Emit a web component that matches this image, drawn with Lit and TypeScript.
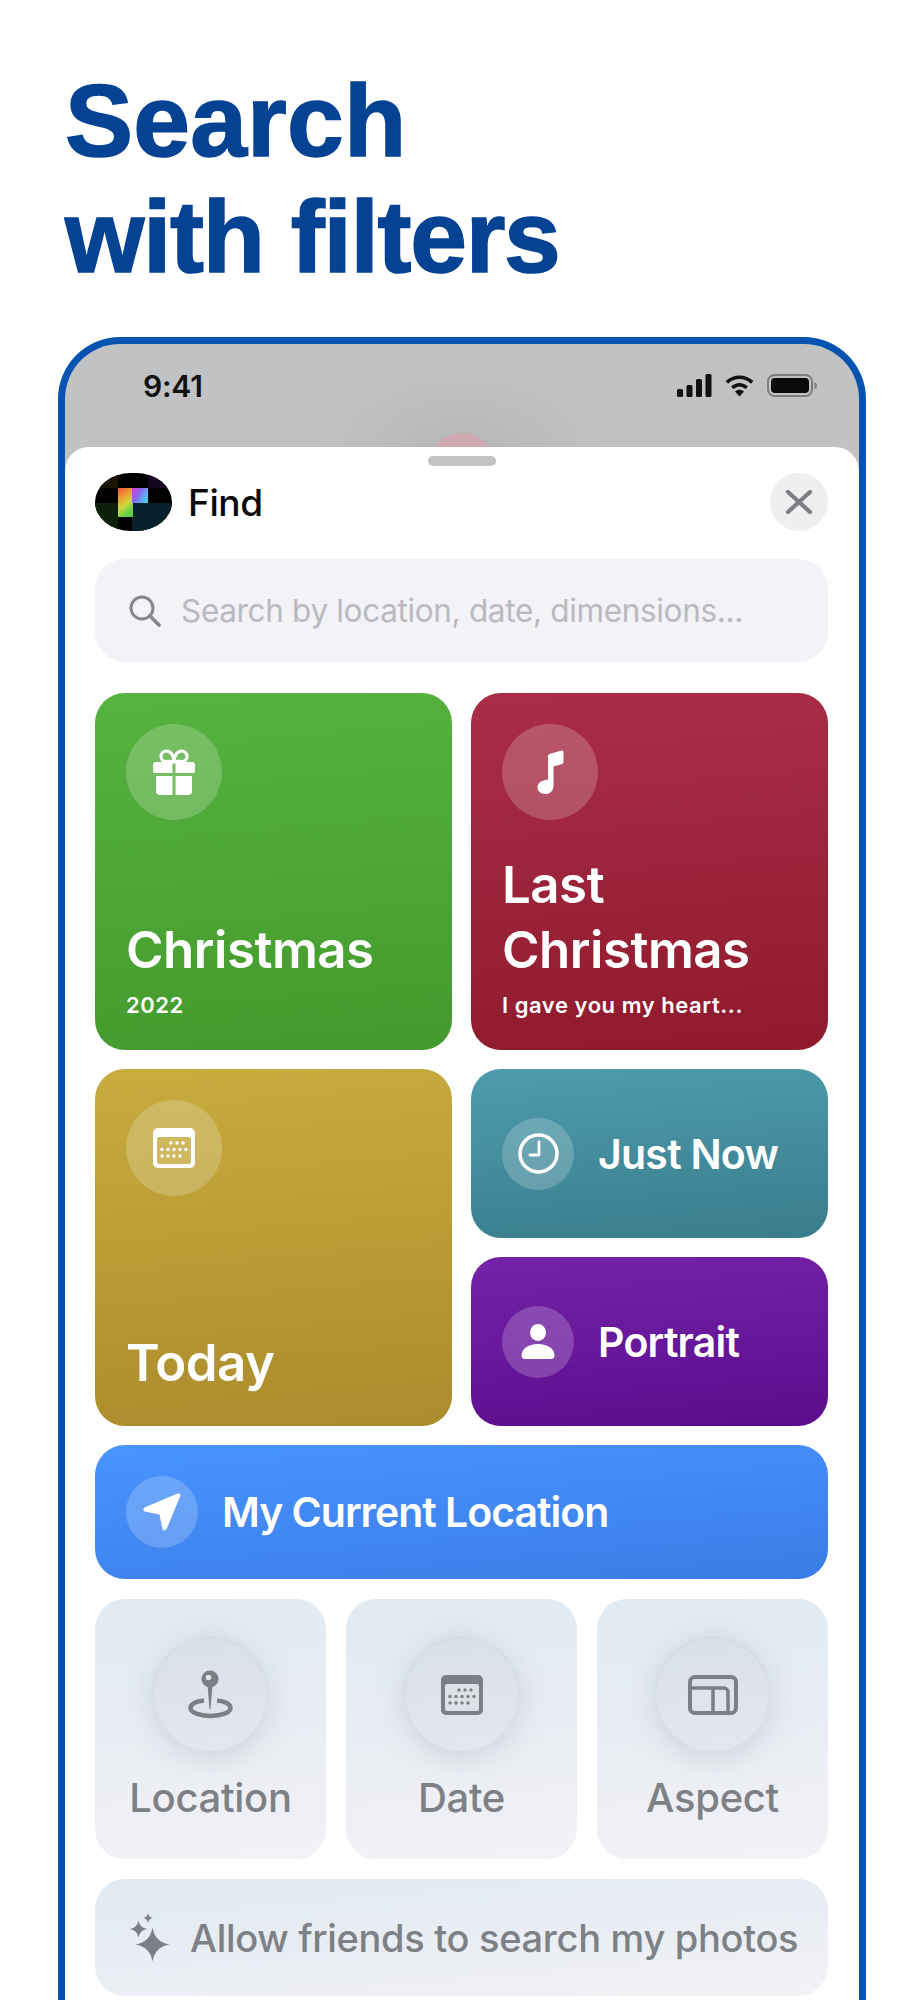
import { LitElement, html, css, svg } from "lit";
import { customElement } from "lit/decorators.js";

const star = (x: number, y: number, r: number) => {
  const k = r * 0.14;
  return `M${x} ${y - r}Q${x + k} ${y - k} ${x + r} ${y}Q${x + k} ${y + k} ${x} ${y + r}Q${x - k} ${y + k} ${x - r} ${y}Q${x - k} ${y - k} ${x} ${y - r}Z`;
};
const gift = svg`<svg width="42" height="46" viewBox="0 0 42 46" fill="#fff"><path d="M0 16a3 3 0 0 1 3-3h16.500v11H2a2 2 0 0 1-2-2zM22.500 13H39a3 3 0 0 1 3 3v6a2 2 0 0 1-2 2H22.500zM3 27h16.500v19H7a4 4 0 0 1-4-4zM22.500 27H39v15a4 4 0 0 1-4 4H22.500z"/><path d="M21 13c-2-1-4.500-.5-8-.5A5 5 0 0 1 8 7.500a5.500 5.500 0 0 1 5.500-5.500C18 2 21 7 21 13c0-6 3-11 7.500-11A5.500 5.500 0 0 1 34 7.500a5 5 0 0 1-5 5c-3.500 0-6-.5-8 .5z" fill="none" stroke="#fff" stroke-width="3.200"/></svg>`;
const note = svg`<svg width="28" height="44" viewBox="0 0 28 44" fill="#fff"><path d="M12 6.500c0-1.500.8-2.400 2.200-2.800l10.500-3C26.500.200 27.500 1 27.500 2.500v9c0 1.500-.7 2.300-2 2.700L17.500 16.500V36c0 4.500-3.500 8-8 8C4.500 44 1.500 41 1.500 37.500c0-4 3.200-6.500 7-7.300L12 29.500z"/></svg>`;
const cal = (c: string, dots: string) => svg`<svg width="42" height="40" viewBox="0 0 42 40"><rect width="42" height="40" rx="5" fill="${c}"/><rect x="4" y="9" width="34" height="27" rx="2" fill="${dots}"/>${[
  [19, 14], [25, 14], [31, 14], [10, 20.5], [16, 20.5], [22, 20.5], [28, 20.5], [34, 20.5], [10, 27], [16, 27], [22, 27], [28, 27],
].map(([x, y]) => svg`<circle cx="${x - 1}" cy="${y + 1}" r="1.7" fill="${c}"/>`)}</svg>`;
const clock = svg`<svg width="41" height="41" viewBox="0 0 41 41" fill="none" stroke="#fff"><circle cx="20.5" cy="20.5" r="18.5" stroke-width="3.5"/><path d="M21 9v13h-9" stroke-width="2.8" stroke-linecap="round" stroke-linejoin="round"/></svg>`;
const person = svg`<svg width="34" height="35" viewBox="0 0 34 35" fill="#fff"><ellipse cx="17" cy="8.5" rx="8" ry="8.5"/><path d="M17 20c10 0 16.500 5 16.500 11.500 0 2.500-1.500 3.500-4 3.500H4.500C2 35 .5 34 .5 31.500.5 25 7 20 17 20z"/></svg>`;
const arrow = svg`<svg width="38" height="38" viewBox="0 0 38 38" fill="#fff"><path d="M34.500.6c2-.8 3.400.7 2.700 2.700L23.800 35.500c-1 2.600-4 2.600-4.600-.3L16.500 21.500 2.600 18.800C-.2 18.200-.3 15.300 2.200 14.300z"/></svg>`;
const pin = svg`<svg width="48" height="50" viewBox="0 0 48 50" fill="none"><path d="M17 30.500C9 31 3.500 34 3.500 38c0 4.500 9 8 20 8s20-3.500 20-8c0-4-5.500-7-13.500-7.500" stroke="#7c7f85" stroke-width="4.500"/><circle cx="23" cy="9" r="8.500" fill="#7c7f85"/><circle cx="21.500" cy="7.500" r="2.800" fill="#e2e6eb"/><path d="M20.500 15h5L23.500 39h-1z" fill="#7c7f85"/></svg>`;
const aspect = svg`<svg width="50" height="40" viewBox="0 0 50 40" fill="none" stroke="#7c7f85" stroke-width="4"><rect x="2" y="2" width="46" height="36" rx="5"/><path d="M3 13h33a4 4 0 0 1 4 4v19M25 13v24" stroke-width="3.5"/></svg>`;
const sparkle = svg`<svg width="40" height="49" viewBox="0 0 40 49" fill="#7c7f85"><path d="${star(22.5, 31.5, 17)}"/><path d="${star(8.5, 16, 8.5)}"/><path d="${star(18, 5, 5)}"/></svg>`;

@customElement("app-root")
export class AppRoot extends LitElement {
  static styles = css`
    :host { display: block; height: 2000px; overflow: hidden; background: #fff; font-family: Inter, "Liberation Sans", sans-serif; }
    h1 { margin: 0; padding: 63px 0 0 65px; font-family: "Liberation Sans", Arial, sans-serif; font-size: 102px; line-height: 116px; font-weight: 700; color: #044293; height: 337px; box-sizing: border-box; -webkit-text-stroke: 1.6px #044293; }
    h1 span { display: block; }
    .l1 { letter-spacing: .2px; }
    .l2 { letter-spacing: -1.3px; }
    .phone { margin: 0 57px 0 58px; height: 1700px; box-sizing: border-box; border: 7px solid #0453b0; border-bottom: 0; border-radius: 62px 62px 0 0; background: #c0c2c3; position: relative; overflow: hidden; }
    .pink { position: absolute; left: 363px; top: 89px; width: 68px; height: 68px; border-radius: 50%; background: #cfa8b1; }
    .halo { position: absolute; left: 247px; top: 20px; width: 300px; height: 190px; border-radius: 50%; background: radial-gradient(closest-side, #b3b5b7, rgba(192,194,195,0)); }
    .status { position: relative; height: 103px; display: flex; justify-content: space-between; padding: 20px 42px 0 78px; box-sizing: border-box; align-items: flex-start; }
    .time { font-size: 30px; font-weight: 600; color: #111; line-height: 44px; letter-spacing: -.2px; }
    .sicons { display: flex; gap: 13px; padding-top: 10px; }
    .sheet { position: relative; background: #fff; border-radius: 24px 24px 0 0; height: 1600px; padding: 26px 31px 0 30px; box-sizing: border-box; display: flex; flex-direction: column; }
    .handle { position: absolute; left: 363px; top: 9px; width: 68px; height: 10px; border-radius: 5px; background: #c3c3c6; }
    .head { display: flex; align-items: center; height: 58px; }
    .logo { width: 77px; height: 58px; border-radius: 36px / 29px; overflow: hidden; flex: none; }
    .find { margin-left: 16px; font-size: 37px; font-weight: 500; color: #0a0a0a; flex: 1; letter-spacing: -.4px; }
    .close { width: 58px; height: 58px; border-radius: 50%; background: #efeff1; display: flex; align-items: center; justify-content: center; }
    .search { margin-top: 28px; height: 103px; border-radius: 30px; background: #f2f2f7; display: flex; align-items: center; padding-left: 34px; color: #b9b9be; font-size: 31.5px; letter-spacing: -.33px; flex: none; }
    .search svg { margin-right: 20px; }
    .grid { margin-top: 31px; display: grid; grid-template-columns: 357px 357px; column-gap: 19px; row-gap: 19px; }
    .card { border-radius: 30px; color: #fff; box-sizing: border-box; display: flex; }
    .big { height: 357px; padding: 31px; flex-direction: column; justify-content: space-between; }
    .stack { display: flex; flex-direction: column; gap: 19px; }
    .small { height: 169px; padding: 0 31px; align-items: center; gap: 24px; }
    .green { background: linear-gradient(175deg, #57b23f, #439a2c); }
    .red { background: linear-gradient(175deg, #aa2d47, #8e1a2c); }
    .gold { background: linear-gradient(175deg, #c8ac3e, #ab8b2c); }
    .teal { background: linear-gradient(175deg, #4d9cad, #3a7c8c); }
    .purple { background: linear-gradient(175deg, #7423a8, #5b0c8c); }
    .blue { background: linear-gradient(175deg, #4994ff, #3a7ce6); }
    .disc { border-radius: 50%; background: rgba(255,255,255,.2); display: flex; align-items: center; justify-content: center; flex: none; }
    .d96 { width: 96px; height: 96px; }
    .d72 { width: 72px; height: 72px; }
    .t { font-size: 51px; font-weight: 600; line-height: 65px; letter-spacing: -.5px; }
    .s { font-size: 22px; font-weight: 600; line-height: 26px; margin-top: 10px; letter-spacing: .55px; }
    .m { font-size: 41px; font-weight: 600; letter-spacing: -.75px; }
    .loc .m { letter-spacing: -1px; }
    .bt { padding-bottom: 1px; }
    .today { padding-bottom: 0; }
    .loc { margin-top: 19px; height: 134px; padding: 0 31px; align-items: center; gap: 24px; flex: none; }
    .trio { margin-top: 20px; display: grid; grid-template-columns: 231px 231px 231px; column-gap: 20px; }
    .tile { height: 260px; border-radius: 30px; background: linear-gradient(175deg, #e0eaf1, #f2f1f6); display: flex; flex-direction: column; align-items: center; padding-top: 38px; box-sizing: border-box; color: #7d8085; font-size: 40px; font-weight: 500; }
    .ring { width: 115px; height: 115px; border-radius: 50%; background: linear-gradient(175deg, #d9e0e7, #e3e7ed); box-shadow: 0 5px 30px rgba(120,130,145,.26), 0 0 0 1px rgba(160,165,175,.16) inset; display: flex; align-items: center; justify-content: center; margin-bottom: 21px; }
    .lab { letter-spacing: -.3px; line-height: 50px; }
    .allow { margin-top: 20px; height: 117px; border-radius: 30px; background: linear-gradient(175deg, #e0eaf1, #f2f1f6); display: flex; align-items: center; padding-left: 35px; gap: 20px; color: #7d8085; font-size: 38px; font-weight: 500; letter-spacing: -.3px; flex: none; white-space: nowrap; }
  `;

  render() {
    return html`
      <h1><span class="l1">Search</span><span class="l2">with filters</span></h1>
      <div class="phone">
        <div class="halo"></div>
        <div class="pink"></div>
        <div class="status">
          <span class="time">9:41</span>
          <div class="sicons">
            <svg width="35" height="23" viewBox="0 0 35 23" fill="#111"><rect x="0" y="15" width="6" height="8" rx="1.5"/><rect x="9.5" y="11" width="6" height="12" rx="1.5"/><rect x="19" y="5" width="6" height="18" rx="1.5"/><rect x="28.5" y="0" width="6" height="23" rx="1.5"/></svg>
            <svg width="29" height="23" viewBox="0 0 32 24" fill="none" stroke="#111" stroke-width="4"><path d="M2 8.500C10 1 22 1 30 8.500"/><path d="M8 14.500c5-4.500 11-4.500 16 0"/><path d="M16 24l-5-5.500c3-2.500 7-2.500 10 0z" fill="#111" stroke="none"/></svg>
            <svg width="50" height="23" viewBox="0 0 50 23"><rect x="1" y="1" width="44" height="21" rx="6.5" fill="none" stroke="#7c7d7e" stroke-width="2"/><rect x="4" y="4" width="38" height="15" rx="4" fill="#0b0b0b"/><path d="M47.500 8c1.500.5 2.500 2 2.500 3.500S49 14.500 47.500 15z" fill="#7c7d7e"/></svg>
          </div>
        </div>
        <div class="sheet">
          <div class="handle"></div>
          <div class="head">
            <div class="logo">
              <svg width="77" height="58" viewBox="0 0 77 58">
                <defs>
                  <linearGradient id="lg" x1="0" y1="0" x2=".4" y2="1"><stop offset="0" stop-color="#f4503f"/><stop offset=".35" stop-color="#f09a30"/><stop offset=".65" stop-color="#cfd83a"/><stop offset="1" stop-color="#5ed04a"/></linearGradient>
                  <linearGradient id="lb" x1="0" y1="0" x2="1" y2=".6"><stop offset="0" stop-color="#d83ec0"/><stop offset=".5" stop-color="#8a6cf0"/><stop offset="1" stop-color="#4cc8f0"/></linearGradient>
                </defs>
                <rect width="77" height="58" fill="#000"/>
                <rect x="0" y="0" width="23" height="15" fill="#1a1400"/>
                <rect x="53" y="0" width="24" height="15" fill="#150520"/>
                <rect x="0" y="30" width="23" height="28" fill="#0a2008"/>
                <rect x="37" y="30" width="40" height="28" fill="#06202c"/>
                <rect x="23" y="15" width="15" height="29" fill="url(#lg)"/>
                <rect x="37" y="15" width="16" height="15" fill="url(#lb)"/>
              </svg>
            </div>
            <span class="find">Find</span>
            <div class="close"><svg width="28" height="24" viewBox="0 0 28 24" fill="none" stroke="#7d7d82" stroke-width="4.2" stroke-linecap="round"><path d="M3 2l22 20M25 2L3 22"/></svg></div>
          </div>
          <div class="search">
            <svg width="32" height="32" viewBox="0 0 32 32" fill="none" stroke="#85858b" stroke-width="3"><circle cx="13" cy="13" r="11"/><path d="M21 21l9 9" stroke-linecap="round" stroke-width="3.6"/></svg>
            Search by location, date, dimensions...
          </div>
          <div class="grid">
            <div class="card big green">
              <div class="disc d96">${gift}</div>
              <div class="bt"><div class="t">Christmas</div><div class="s">2022</div></div>
            </div>
            <div class="card big red">
              <div class="disc d96">${note}</div>
              <div class="bt"><div class="t">Last<br />Christmas</div><div class="s">I gave you my heart...</div></div>
            </div>
            <div class="card big gold">
              <div class="disc d96">${cal("#fff", "#cfb860")}</div>
              <div class="bt today"><div class="t">Today</div></div>
            </div>
            <div class="stack">
              <div class="card small teal"><div class="disc d72">${clock}</div><span class="m">Just Now</span></div>
              <div class="card small purple"><div class="disc d72">${person}</div><span class="m">Portrait</span></div>
            </div>
          </div>
          <div class="card loc blue"><div class="disc d72">${arrow}</div><span class="m">My Current Location</span></div>
          <div class="trio">
            <div class="tile"><div class="ring">${pin}</div><span class="lab">Location</span></div>
            <div class="tile"><div class="ring">${cal("#7c7f85", "#dde2e8")}</div><span class="lab">Date</span></div>
            <div class="tile"><div class="ring">${aspect}</div><span class="lab">Aspect</span></div>
          </div>
          <div class="allow">${sparkle}<span>Allow friends to search my photos</span></div>
        </div>
      </div>
    `;
  }
}
